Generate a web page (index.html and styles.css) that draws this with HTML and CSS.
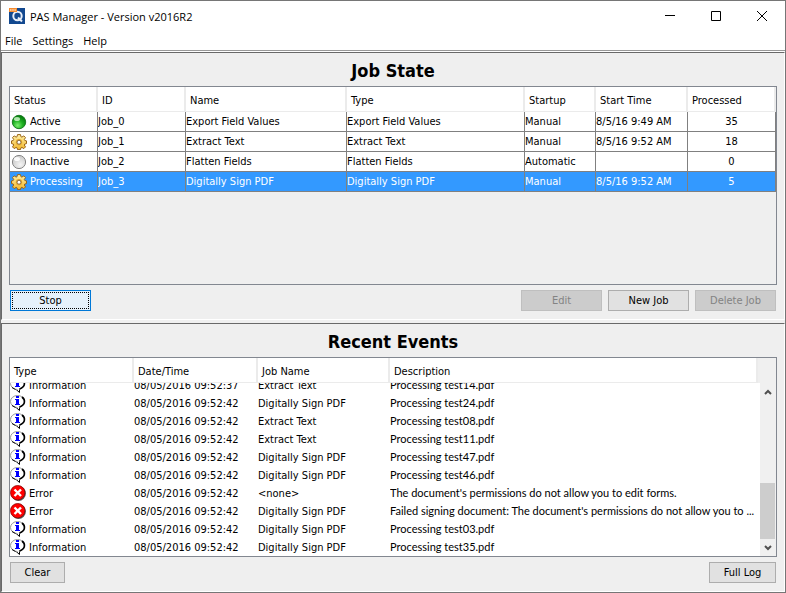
FILE: index.html
```html
<!DOCTYPE html>
<html lang="en">

<head>
  <meta charset="utf-8">
  <title>PAS Manager - Version v2016R2</title>
  <meta name="viewport" content="width=device-width, initial-scale=1">
  <link rel="stylesheet" href="styles.css">
</head>
<body>
  <svg class="symbols" aria-hidden="true">
    <defs>
      <radialGradient id="green" cx="40%" cy="75%" r="75%">
        <stop offset="0" stop-color="#7cf070"/>
        <stop offset="0.5" stop-color="#1fb022"/>
        <stop offset="1" stop-color="#04780c"/>
      </radialGradient>
      <radialGradient id="grey" cx="60%" cy="70%" r="70%">
        <stop offset="0" stop-color="#f4f4f4"/>
        <stop offset="1" stop-color="#c8c8c8"/>
      </radialGradient>
      <linearGradient id="gold" x1="0" y1="0" x2="0" y2="1">
        <stop offset="0" stop-color="#fff0a8"/>
        <stop offset="1" stop-color="#f2b72c"/>
      </linearGradient>
    </defs>
    <symbol id="active" viewBox="0 0 16 16">
      <circle cx="8" cy="8" r="6.700" fill="url(#green)" stroke="#1b7d22"/>
      <ellipse cx="6" cy="5" rx="3" ry="2" fill="#d9f8d4" opacity="0.8"/>
    </symbol>
    <symbol id="inactive" viewBox="0 0 16 16">
      <circle cx="8" cy="8" r="6.600" fill="url(#grey)" stroke="#858585"/>
      <ellipse cx="6" cy="5" rx="3" ry="2" fill="#fff" opacity="0.9"/>
    </symbol>
    <symbol id="processing" viewBox="0 0 16 16">
      <path d="M6.500.6h3l.4 2 1 .5 1.900-1.200 1.700 1.700-1.200 1.900.5 1 1.700.4v2.700l-1.700.4-.5 1 1.200 1.900-1.700 1.700-1.900-1.200-1 .5-.4 1.700h-3l-.4-1.700-1-.5-1.900 1.200-1.700-1.700 1.200-1.900-.5-1-1.700-.4V6.900l1.700-.4.5-1-1.200-1.900 1.700-1.700 1.900 1.200 1-.5z" fill="url(#gold)" stroke="#9a6414"/>
      <circle cx="8" cy="8.200" r="3.200" fill="#e9ae30"/>
      <circle cx="8" cy="8.200" r="2" fill="#fff" stroke="#8a6a3a"/>
    </symbol>
    <symbol id="info" viewBox="0 0 16 16">
      <path d="M5 11.500l4.500 4v-4z" fill="#fff" stroke="#000"/>
      <ellipse cx="7.500" cy="6.500" rx="7" ry="6" fill="#fff" stroke="#999"/>
      <path d="M12 2c3.800 3 3.400 7.800-2.500 10" fill="none" stroke="#000" stroke-width="1.600"/>
      <path d="M2 10.500l3.500 2" stroke="#000" fill="none"/>
      <path d="M6.500 11.300h2.500v2.400z" fill="#fff"/>
      <path d="M6 1h3v2H6zM5 4h4v5h1v1H5V9h1V5H5z" fill="#00f"/>
    </symbol>
    <symbol id="error" viewBox="0 0 16 16">
      <circle cx="8.500" cy="8.500" r="7.400" fill="#555"/>
      <circle cx="7.700" cy="7.700" r="7.200" fill="#f00" stroke="#8c0000" stroke-width=".8"/>
      <path d="M4.500 4.500l6.500 6.500M11 4.500L4.500 11" stroke="#fff" stroke-width="2.400"/>
    </symbol>
  </svg>

  <div class="window">
    <header class="titlebar">
      <svg class="app-icon" viewBox="0 0 16 16">
        <rect width="16" height="16" fill="#12488f"/>
        <circle cx="8.500" cy="8" r="4.200" fill="none" stroke="#e8eef8" stroke-width="2"/>
        <path d="M9 9.500l4 4" stroke="#e8eef8" stroke-width="2"/>
        <rect width="8" height="4" fill="#f58a2c"/>
        <path d="M1 2h6" stroke="#fcd8b4" stroke-width="1.500" stroke-dasharray="1.500 .7"/>
      </svg>
      <h1 class="app-title">PAS Manager - Version v2016R2</h1>
      <button class="window-button" aria-label="Minimize"><svg viewBox="0 0 11 11"><path d="M0 4.500h10"/></svg></button>
      <button class="window-button" aria-label="Maximize"><svg viewBox="0 0 11 11"><path d="M.5.500h9v9h-9z"/></svg></button>
      <button class="window-button" aria-label="Close"><svg viewBox="0 0 11 11"><path d="M0 0l10 10M10 0L0 10"/></svg></button>
    </header>
    <nav class="menubar">
      <button class="menu">File</button>
      <button class="menu">Settings</button>
      <button class="menu">Help</button>
    </nav>

    <main class="panels">
      <section class="panel">
        <h2 class="headline">Job State</h2>
        <div class="table-box">
          <table class="jobs">
            <colgroup>
              <col class="status"><col class="id"><col class="name"><col>
              <col class="startup"><col class="start-time"><col class="processed">
            </colgroup>
            <thead>
              <tr><th>Status</th><th>ID</th><th>Name</th><th>Type</th><th>Startup</th><th>Start Time</th><th>Processed</th></tr>
            </thead>
            <tbody>
              <tr>
                <td><span class="with-icon"><svg class="icon"><use href="#active"/></svg>Active</span></td>
                <td>Job_0</td><td>Export Field Values</td><td>Export Field Values</td><td>Manual</td><td>8/5/16 9:49 AM</td><td class="number">35</td>
              </tr>
              <tr>
                <td><span class="with-icon"><svg class="icon"><use href="#processing"/></svg>Processing</span></td>
                <td>Job_1</td><td>Extract Text</td><td>Extract Text</td><td>Manual</td><td>8/5/16 9:52 AM</td><td class="number">18</td>
              </tr>
              <tr>
                <td><span class="with-icon"><svg class="icon"><use href="#inactive"/></svg>Inactive</span></td>
                <td>Job_2</td><td>Flatten Fields</td><td>Flatten Fields</td><td>Automatic</td><td></td><td class="number">0</td>
              </tr>
              <tr class="selected">
                <td><span class="with-icon"><svg class="icon"><use href="#processing"/></svg>Processing</span></td>
                <td>Job_3</td><td>Digitally Sign PDF</td><td>Digitally Sign PDF</td><td>Manual</td><td>8/5/16 9:52 AM</td><td class="number">5</td>
              </tr>
            </tbody>
          </table>
        </div>
        <div class="buttons">
          <button class="button focused">Stop</button>
          <span class="spacer"></span>
          <button class="button" disabled>Edit</button>
          <button class="button">New Job</button>
          <button class="button" disabled>Delete Job</button>
        </div>
      </section>

      <section class="panel log-panel">
        <h2 class="headline">Recent Events</h2>
        <div class="table-box events-box">
          <div class="events-scroll">
            <table class="events">
              <colgroup>
                <col class="type"><col class="date"><col class="job-name"><col><col class="corner">
              </colgroup>
              <thead>
                <tr><th>Type</th><th>Date/Time</th><th>Job Name</th><th>Description</th><td class="corner"></td></tr>
              </thead>
              <tbody>
                <tr><td><span class="with-icon"><svg class="icon"><use href="#info"/></svg>Information</span></td><td>08/05/2016 09:52:37</td><td>Extract Text</td><td class="description" colspan="2">Processing test14.pdf</td></tr>
                <tr><td><span class="with-icon"><svg class="icon"><use href="#info"/></svg>Information</span></td><td>08/05/2016 09:52:42</td><td>Digitally Sign PDF</td><td class="description" colspan="2">Processing test24.pdf</td></tr>
                <tr><td><span class="with-icon"><svg class="icon"><use href="#info"/></svg>Information</span></td><td>08/05/2016 09:52:42</td><td>Extract Text</td><td class="description" colspan="2">Processing test08.pdf</td></tr>
                <tr><td><span class="with-icon"><svg class="icon"><use href="#info"/></svg>Information</span></td><td>08/05/2016 09:52:42</td><td>Extract Text</td><td class="description" colspan="2">Processing test11.pdf</td></tr>
                <tr><td><span class="with-icon"><svg class="icon"><use href="#info"/></svg>Information</span></td><td>08/05/2016 09:52:42</td><td>Digitally Sign PDF</td><td class="description" colspan="2">Processing test47.pdf</td></tr>
                <tr><td><span class="with-icon"><svg class="icon"><use href="#info"/></svg>Information</span></td><td>08/05/2016 09:52:42</td><td>Digitally Sign PDF</td><td class="description" colspan="2">Processing test46.pdf</td></tr>
                <tr><td><span class="with-icon"><svg class="icon"><use href="#error"/></svg>Error</span></td><td>08/05/2016 09:52:42</td><td>&lt;none&gt;</td><td class="description" colspan="2">The document's permissions do not allow you to edit forms.</td></tr>
                <tr><td><span class="with-icon"><svg class="icon"><use href="#error"/></svg>Error</span></td><td>08/05/2016 09:52:42</td><td>Digitally Sign PDF</td><td class="description" colspan="2">Failed signing document: The document's permissions do not allow you to ...</td></tr>
                <tr><td><span class="with-icon"><svg class="icon"><use href="#info"/></svg>Information</span></td><td>08/05/2016 09:52:42</td><td>Digitally Sign PDF</td><td class="description" colspan="2">Processing test03.pdf</td></tr>
                <tr><td><span class="with-icon"><svg class="icon"><use href="#info"/></svg>Information</span></td><td>08/05/2016 09:52:42</td><td>Digitally Sign PDF</td><td class="description" colspan="2">Processing test35.pdf</td></tr>
              </tbody>
            </table>
          </div>
          <div class="scrollbar">
            <button class="arrow" aria-label="Scroll up"><svg viewBox="0 0 8 6"><path d="M1 5l3-3 3 3"/></svg></button>
            <div class="track"><div class="thumb"></div></div>
            <button class="arrow" aria-label="Scroll down"><svg viewBox="0 0 8 6"><path d="M1 1l3 3 3-3"/></svg></button>
          </div>
        </div>
        <div class="buttons">
          <button class="button small">Clear</button>
          <span class="spacer"></span>
          <button class="button medium">Full Log</button>
        </div>
      </section>
    </main>
  </div>
</body>
</html>
```
FILE: styles.css
```css
/* basic style */
* {
  box-sizing: border-box;
}

body {
  margin: 0;
  font-family: "DejaVu Sans Condensed", sans-serif;
  font-size: 11px;
  color: #000;
}

button {
  font: inherit;
  color: inherit;
  padding: 0;
}

.symbols {
  position: absolute;
  width: 0;
  height: 0;
}

.window {
  display: flex;
  flex-direction: column;
  height: 100vh;
  border: 1px solid #767676;
  background: #fff;
}

/* title bar and menu */
.titlebar {
  display: flex;
  align-items: center;
  height: 30px;
  padding-left: 8px;
  font-family: "Open Sans", sans-serif;
}

.app-icon {
  width: 16px;
  height: 16px;
}

.app-title {
  flex: 1;
  margin: 0 0 0 5px;
  font-size: 11px;
  font-weight: normal;
}

.window-button {
  display: flex;
  align-items: center;
  justify-content: center;
  width: 46px;
  height: 30px;
  border: 0;
  background: none;
}

.window-button svg {
  width: 11px;
  height: 11px;
  fill: none;
  stroke: #000;
}

.menubar {
  display: flex;
  gap: 10px;
  height: 20px;
  padding-left: 4px;
  border-bottom: 1px solid #999;
  font-family: "Open Sans", sans-serif;
}

.menu {
  border: 0;
  background: none;
}

/* panels */
.panels {
  flex: 1;
  min-height: 0;
  display: flex;
  flex-direction: column;
  gap: 3px;
  margin-top: 1px;
  background: #f0f0f0;
}

.panel {
  flex: 1 1 100px;
  min-height: 0;
  display: flex;
  flex-direction: column;
  padding: 0 7px 8px;
  border: 1px solid #fff;
  border-top-color: #696969;
  border-left-color: #696969;
  background: #efefef;
}

.log-panel {
  flex-basis: 101px;
}

.headline {
  margin: 0;
  padding-top: 3px;
  font-size: 18px;
  line-height: 30px;
  text-align: center;
}

.table-box {
  flex: 1;
  min-height: 0;
  overflow: hidden;
  border: 1px solid #828790;
}

/* tables */
table {
  width: 100%;
  table-layout: fixed;
  border-collapse: separate;
  border-spacing: 0;
}

th {
  height: 25px;
  padding: 2px 4px 0;
  border-right: 2px solid #ebebeb;
  border-bottom: 1px solid #ebebeb;
  background: #fff;
  font-weight: normal;
  text-align: left;
}

td {
  padding: 0;
  background: #fff;
  white-space: nowrap;
  overflow: hidden;
}

.jobs td {
  height: 20px;
  border-right: 1px solid #808080;
  border-bottom: 1px solid #808080;
}

.jobs .selected td {
  background: #3399ff;
  color: #fff;
}

.jobs .number {
  text-align: center;
}

.jobs .status,
.jobs .id,
.jobs .processed {
  width: 88px;
}

.jobs .name {
  width: 161px;
}

.jobs .startup {
  width: 71px;
}

.jobs .start-time {
  width: 92px;
}

.with-icon {
  display: flex;
  align-items: center;
  gap: 3px;
}

.jobs .with-icon {
  margin-left: 1px;
}

.icon {
  width: 16px;
  height: 16px;
}

/* event log, opened at its newest entries */
.events-box {
  display: flex;
}

.events-scroll {
  flex: 1;
  min-width: 0;
  display: flex;
  flex-direction: column-reverse;
  overflow: hidden;
  background: #fff;
}

.events thead {
  position: sticky;
  top: 0;
}

.events td {
  height: 18px;
}

.events .description {
  padding-bottom: 2px;
  font-family: Lato, sans-serif;
}

.events .type {
  width: 124px;
}

.events .date {
  width: 124px;
}

.events .job-name {
  width: 132px;
}

.events .corner {
  width: 2px;
  background: #efefef;
}

.scrollbar {
  display: flex;
  flex-direction: column;
  width: 16px;
  padding-top: 25px;
  background: #f0f0f0;
}

.arrow {
  display: flex;
  align-items: center;
  justify-content: center;
  height: 17px;
  border: 0;
  background: none;
}

.arrow svg {
  width: 8px;
  height: 6px;
  fill: none;
  stroke: #505050;
  stroke-width: 2;
}

.track {
  flex: 1;
  display: flex;
  flex-direction: column;
  justify-content: flex-end;
}

.thumb {
  height: 40%;
  margin-right: 1px;
  background: #cdcdcd;
}

/* buttons */
.buttons {
  display: flex;
  gap: 6px;
  margin: 5px 1px 0;
}

.spacer {
  flex: 1;
}

.button {
  width: 81px;
  height: 21px;
  border: 1px solid #adadad;
  background: #e1e1e1;
}

.button:disabled {
  border-color: #bfbfbf;
  background: #ccc;
  color: #838383;
}

.button.focused {
  border-color: #0078d7;
  background: #e5f1fb;
  outline: 1px dotted #000;
  outline-offset: -3px;
}

.button.small {
  width: 55px;
}

.button.medium {
  width: 67px;
}
```
